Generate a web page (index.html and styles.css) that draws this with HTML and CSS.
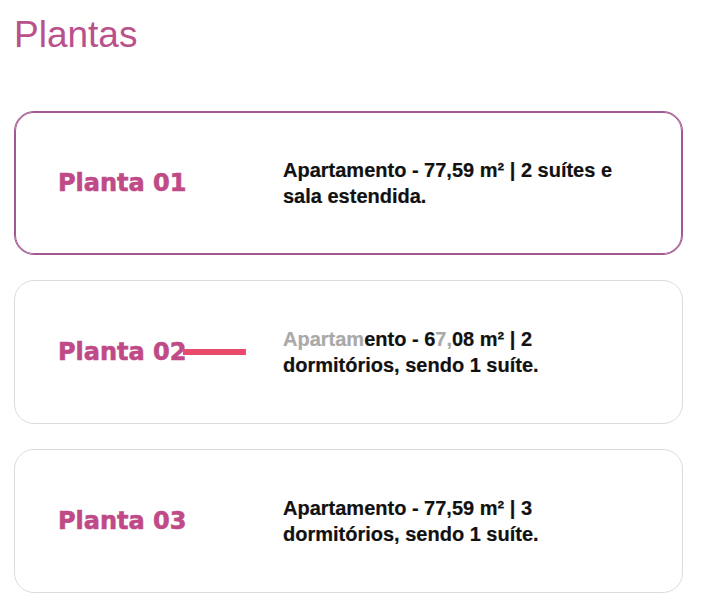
FILE: index.html
```html
<!DOCTYPE html>
<html lang="pt-BR">
<head>
<meta charset="utf-8">
<title>Plantas</title>
<link rel="stylesheet" href="styles.css">
</head>
<body>
<div class="page">
  <h1 class="title">Plantas</h1>
  <div class="list">
    <div class="card active">
      <div class="card-name">Planta 01</div>
      <div class="card-desc">Apartamento - 77,59 m² | 2 suítes e sala estendida.</div>
    </div>
    <div class="card">
      <div class="card-name">Planta 02</div>
      <span class="swipe"></span>
      <div class="card-desc"><span class="fade">Apartam</span>ento - 6<span class="fade">7,</span>08 m² | 2 dormitórios, sendo 1 suíte.</div>
    </div>
    <div class="card">
      <div class="card-name">Planta 03</div>
      <div class="card-desc">Apartamento - 77,59 m² | 3 dormitórios, sendo 1 suíte.</div>
    </div>
  </div>
</div>
</body>
</html>
```
FILE: styles.css
```css
html, body {
  margin: 0;
  padding: 0;
  background: #ffffff;
}
body {
  font-family: "Liberation Sans", Arial, sans-serif;
}
.page {
  padding: 14px 0 0 14px;
}
.title {
  margin: 0;
  font-size: 37px;
  font-weight: normal;
  line-height: normal;
  color: #b9518b;
}
.list {
  margin-top: 55px;
  width: 669px;
  display: flex;
  flex-direction: column;
  gap: 25px;
}
.card {
  position: relative;
  box-sizing: border-box;
  height: 144px;
  border: 1px solid #dcdcdc;
  border-radius: 20px;
  display: flex;
  align-items: center;
  padding-left: 43px;
}
.card.active {
  border-color: #a45891;
  box-shadow: inset 0 0 0 1px #a45891;
}
.card-name {
  width: 225px;
  flex: none;
  font-family: "DejaVu Sans", sans-serif;
  font-weight: bold;
  font-size: 24px;
  color: #c04a88;
  -webkit-text-stroke: 0.6px #c04a88;
}
.card-desc {
  width: 350px;
  font-weight: bold;
  font-size: 20px;
  line-height: 26.5px;
  color: #111111;
  -webkit-text-stroke: 0.2px #111111;
}
.swipe {
  position: absolute;
  left: 168px;
  top: 68px;
  width: 63px;
  height: 6px;
  background: #e94b6b;
}
.fade {
  color: #a9a9a9;
  -webkit-text-stroke: 0.2px #a9a9a9;
}
```
